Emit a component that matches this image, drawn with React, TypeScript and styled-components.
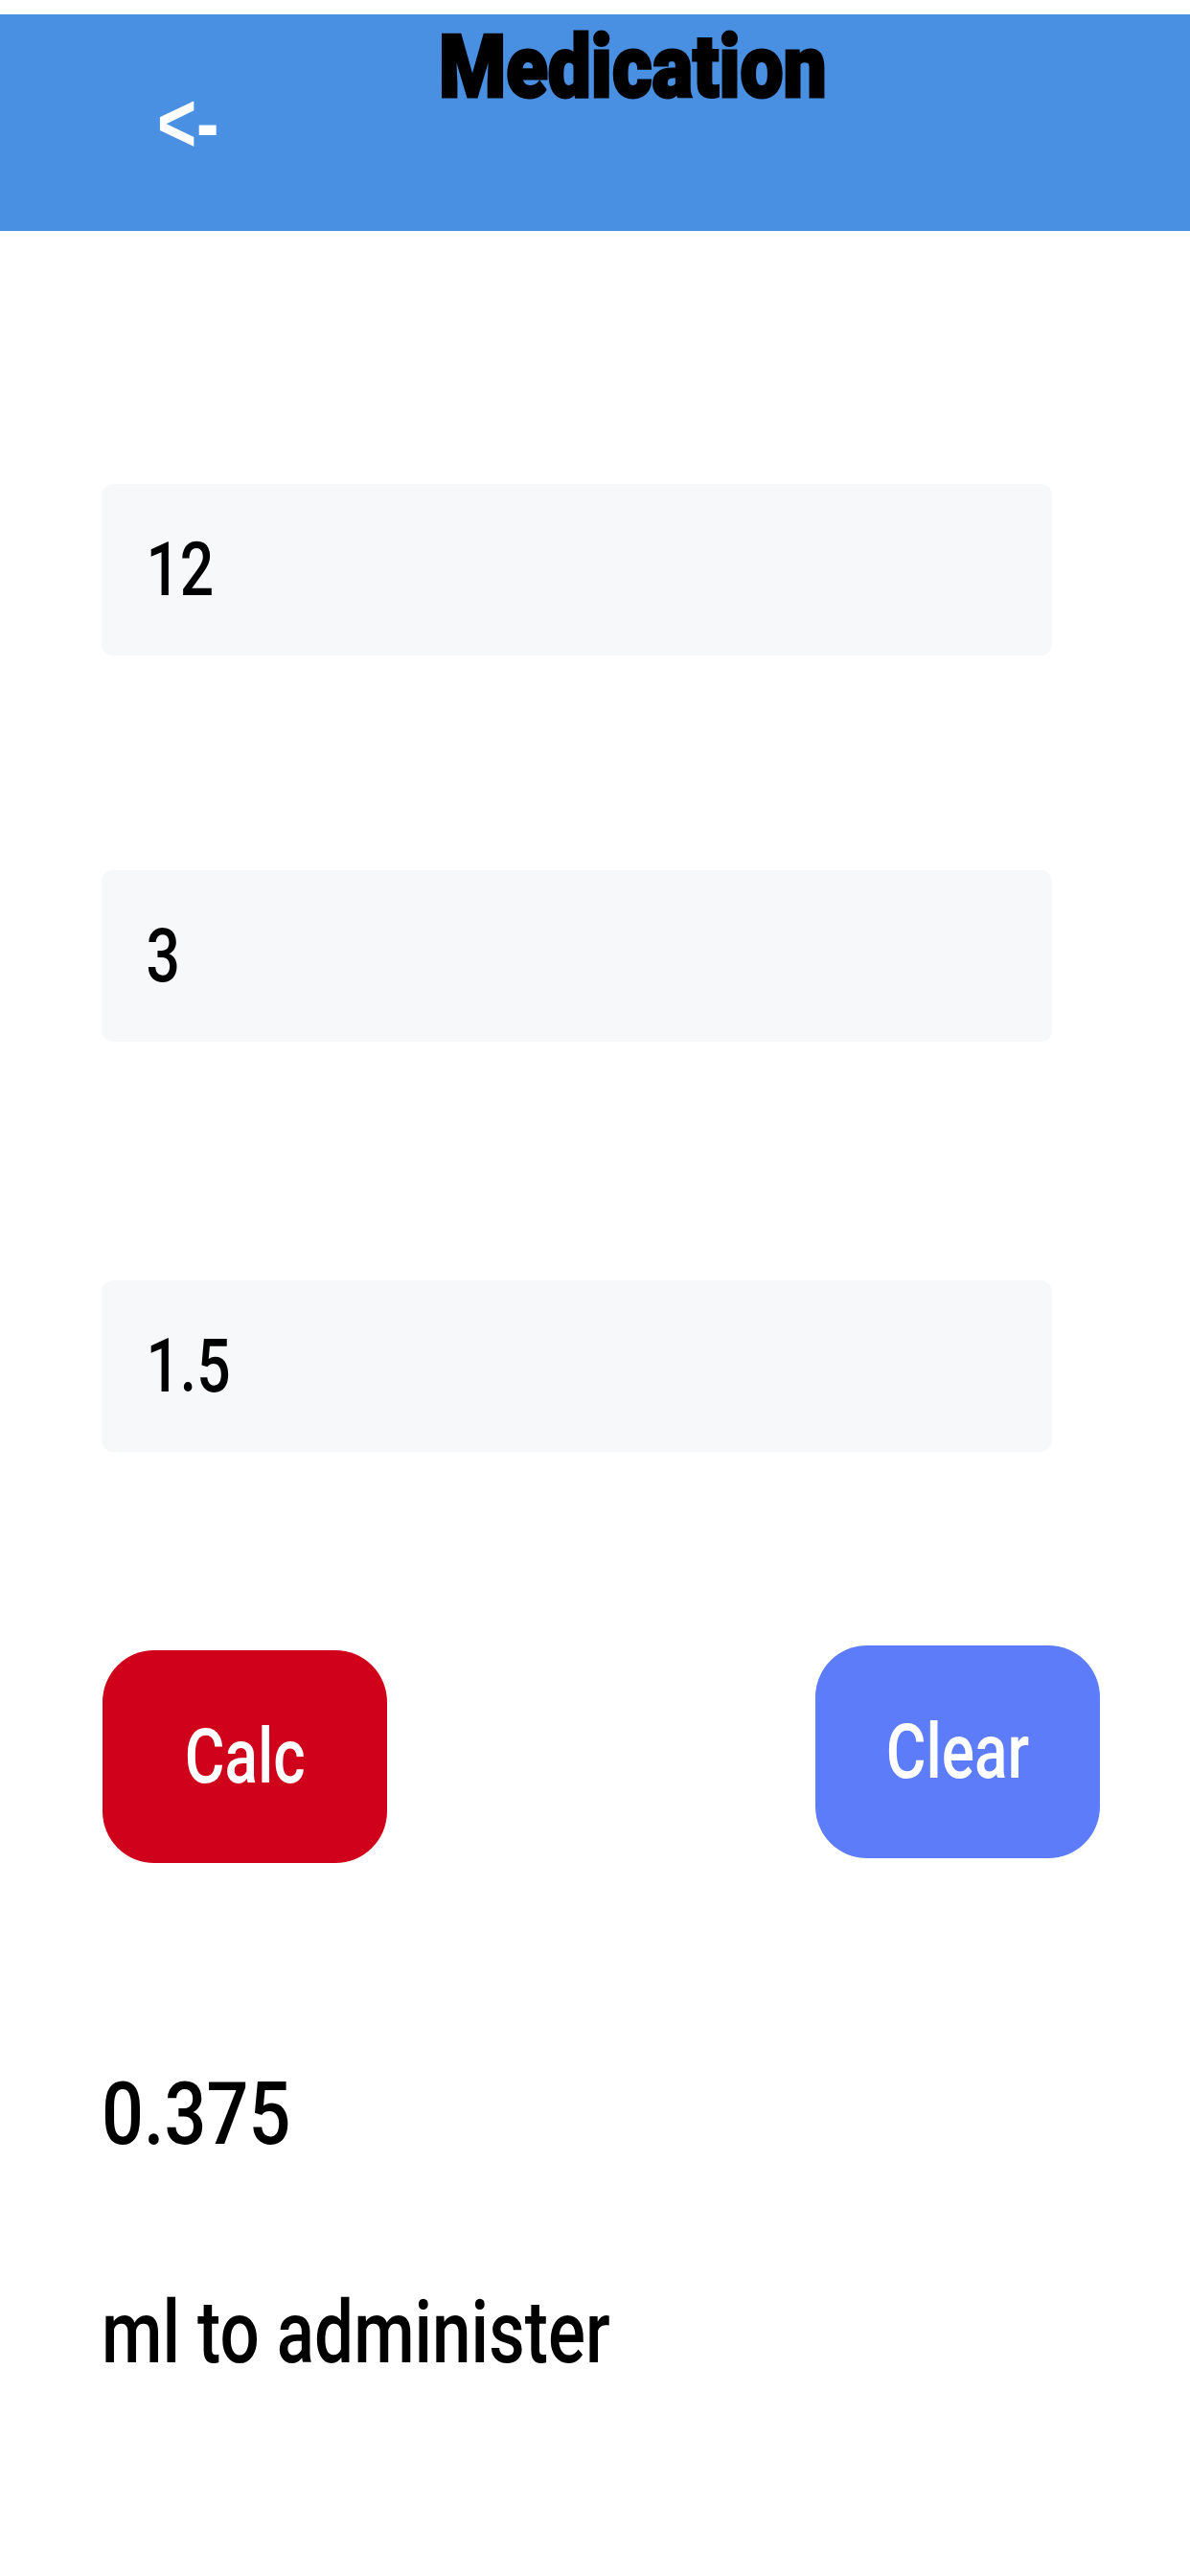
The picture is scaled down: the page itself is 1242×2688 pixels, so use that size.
import { FC, useState } from "react";
import styled, { createGlobalStyle } from "styled-components";

const GlobalStyle = createGlobalStyle`
  body {
    margin: 0;
    background: #ffffff;
    font-family: Roboto, "Liberation Sans", Arial, sans-serif;
  }
`;

const Page = styled("div")`
  padding-top: 15px;
  min-height: 2688px;
  box-sizing: border-box;
  background: #ffffff;
`;

const Header = styled("header")`
  display: grid;
  grid-template-columns: 294px auto;
  align-items: start;
  height: 226px;
  padding-left: 164px;
  box-sizing: border-box;
  background: #4a90e2;
`;

const BackButton = styled("button")`
  justify-self: start;
  margin-top: 69px;
  padding: 0;
  border: none;
  background: none;
  color: #ffffff;
  font: 700 88px "Liberation Sans", Arial, sans-serif;
  line-height: 1;
  transform: scaleX(0.8);
  transform-origin: left center;
  cursor: pointer;
`;

const Title = styled("h1")`
  margin: 0;
  padding-top: 10px;
  color: #000000;
  font: 900 91px Roboto, "Liberation Sans", Arial, sans-serif;
  line-height: 1;
  -webkit-text-stroke: 3px #000000;
  transform: scaleX(0.88);
  transform-origin: left center;
`;

const Main = styled("main")`
  display: flex;
  flex-direction: column;
  align-items: flex-start;
  padding-left: 106px;
`;

const Field = styled("label")<{ $top: number }>`
  display: block;
  margin-top: ${(p) => p.$top}px;
  width: 992px;
  height: 179px;
  border-radius: 12px;
  background: #f7f8fa;
  overflow: hidden;
`;

const Input = styled("input")`
  display: block;
  box-sizing: border-box;
  width: 125%;
  height: 100%;
  padding: 0 0 0 58px;
  border: none;
  outline: none;
  background: transparent;
  color: #000000;
  font: 500 78px Roboto, "Liberation Sans", Arial, sans-serif;
  transform: scaleX(0.8);
  transform-origin: left center;
`;

const ButtonRow = styled("div")`
  display: flex;
  justify-content: space-between;
  align-items: flex-start;
  width: 1041px;
  margin: 202px 0 0 1px;
`;

const ActionButton = styled("button")<{ $color: string; $offset?: number }>`
  display: flex;
  align-items: center;
  justify-content: center;
  width: 297px;
  height: 222px;
  margin-top: ${(p) => p.$offset ?? 0}px;
  padding: 0;
  border: none;
  border-radius: 54px;
  background: ${(p) => p.$color};
  color: #ffffff;
  font: 500 80px Roboto, "Liberation Sans", Arial, sans-serif;
  cursor: pointer;
`;

const ButtonLabel = styled("span")`
  display: inline-block;
  transform: scaleX(0.8);
`;

const ResultValue = styled("p")`
  margin: 217px 0 0;
  color: #000000;
  font: 500 91px Roboto, "Liberation Sans", Arial, sans-serif;
  line-height: 1;
  transform: scaleX(0.85);
  transform-origin: left center;
`;

const ResultLabel = styled("p")`
  margin: 137px 0 0;
  color: #000000;
  font: 500 91px Roboto, "Liberation Sans", Arial, sans-serif;
  line-height: 1;
  transform: scaleX(0.8);
  transform-origin: left center;
`;

const App: FC = () => {
  const [strength, setStrength] = useState("12");
  const [dose, setDose] = useState("3");
  const [volume, setVolume] = useState("1.5");
  const [result, setResult] = useState("0.375");

  const calc = () => {
    const value = (parseFloat(dose) / parseFloat(strength)) * parseFloat(volume);
    setResult(Number.isFinite(value) ? String(value) : "");
  };

  const clear = () => {
    setStrength("");
    setDose("");
    setVolume("");
    setResult("");
  };

  return (
    <>
      <GlobalStyle />
      <Page>
        <Header>
          <BackButton>&lt;-</BackButton>
          <Title>Medication</Title>
        </Header>
        <Main>
          <Field $top={264}>
            <Input value={strength} onChange={(e) => setStrength(e.target.value)} />
          </Field>
          <Field $top={224}>
            <Input value={dose} onChange={(e) => setDose(e.target.value)} />
          </Field>
          <Field $top={249}>
            <Input value={volume} onChange={(e) => setVolume(e.target.value)} />
          </Field>
          <ButtonRow>
            <ActionButton $color="#d0021b" $offset={5} onClick={calc}>
              <ButtonLabel>Calc</ButtonLabel>
            </ActionButton>
            <ActionButton $color="#5c7cfa" onClick={clear}>
              <ButtonLabel>Clear</ButtonLabel>
            </ActionButton>
          </ButtonRow>
          <ResultValue>{result || "\u00a0"}</ResultValue>
          <ResultLabel>ml to administer</ResultLabel>
        </Main>
      </Page>
    </>
  );
};

export default App;
